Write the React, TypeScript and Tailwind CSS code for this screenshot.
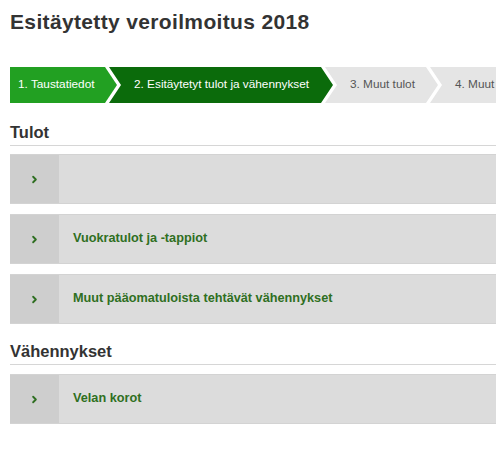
import { ChevronRight } from 'lucide-react'

const steps = [
  { label: '1. Taustatiedot', width: 'w-[107px]', tone: 'bg-[#22a022] text-white', first: true },
  { label: '2. Esitäytetyt tulot ja vähennykset', width: 'w-[224px]', tone: 'bg-[#0b6b0b] text-white' },
  { label: '3. Muut tulot', width: 'w-[113px]', tone: 'bg-[#e5e5e5] text-[#555]' },
  { label: '4. Muut vähennykset', width: 'w-[160px]', tone: 'bg-[#e5e5e5] text-[#555]' },
]

function Row({ label }: { label?: string }) {
  return (
    <div className="flex h-[50px] border-y border-[#d3d3d3] bg-[#dcdcdc]">
      <div className="flex w-[49px] shrink-0 items-center justify-center bg-[#cecece]">
        <ChevronRight className="h-[11px] w-[11px] text-[#2f6f22]" strokeWidth={4} />
      </div>
      <div className="flex items-center pl-[14px] text-[12.7px] font-bold text-[#2f6f22]">
        {label}
      </div>
    </div>
  )
}

function Heading({ children }: { children: string }) {
  return (
    <div className="border-b border-[#d6d6d6] pb-[3px] text-[16.5px] leading-[19px] font-bold text-[#333]">
      {children}
    </div>
  )
}

export default function App() {
  return (
    <div className="w-[496px] overflow-hidden bg-white font-['Liberation_Sans',Arial,sans-serif]">
      <div className="w-[600px] pl-[10px] pt-[10px] pb-[33px]">
        <h1 className="text-[21px] leading-[24px] font-bold tracking-[0.35px] text-[#333]">Esitäytetty veroilmoitus 2018</h1>

        {/* vaiheet */}
        <div className="mt-[33px] flex h-[36px]">
          {steps.map((s, i) => (
            <div
              key={i}
              className={`flex shrink-0 items-center text-[11.8px] ${s.width} ${s.tone} ${
                s.first
                  ? 'pl-[8px] [clip-path:polygon(0_0,calc(100%-12px)_0,100%_50%,calc(100%-12px)_100%,0_100%)]'
                  : 'ml-[-8px] pl-[25px] [clip-path:polygon(0_0,calc(100%-12px)_0,100%_50%,calc(100%-12px)_100%,0_100%,12px_50%)]'
              }`}
            >
              <span className="whitespace-nowrap">{s.label}</span>
            </div>
          ))}
        </div>

        <div className="mt-[20px]">
          <Heading>Tulot</Heading>
        </div>
        <div className="mt-[8px] flex flex-col gap-[10px]">
          <Row />
          <Row label="Vuokratulot ja -tappiot" />
          <Row label="Muut pääomatuloista tehtävät vähennykset" />
        </div>

        <div className="mt-[18px]">
          <Heading>Vähennykset</Heading>
        </div>
        <div className="mt-[9px]">
          <Row label="Velan korot" />
        </div>
      </div>
    </div>
  )
}
